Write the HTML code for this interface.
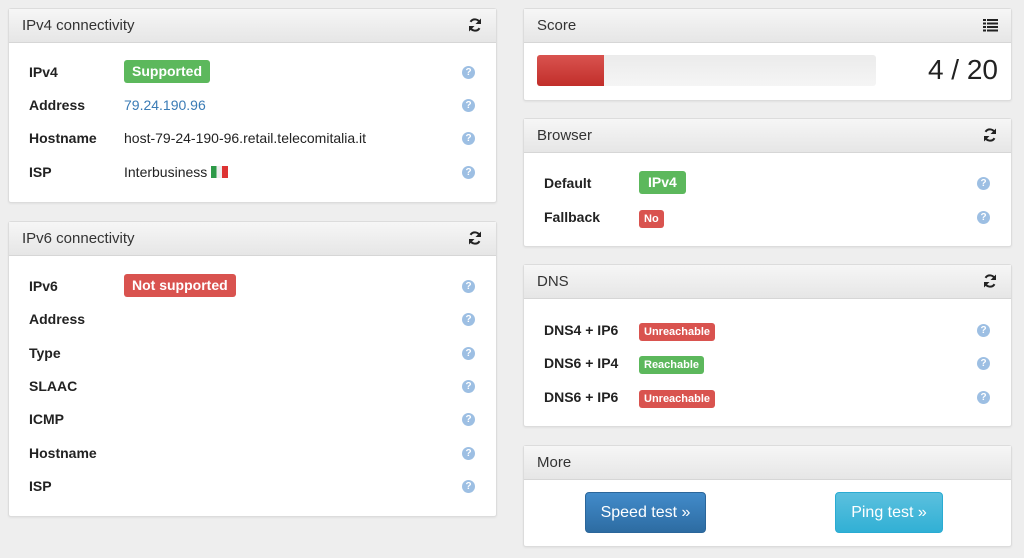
<!DOCTYPE html>
<html><head><meta charset="utf-8"><style>
*{box-sizing:border-box;margin:0;padding:0}
body{width:1024px;height:558px;background:#eeeeee;font-family:"Liberation Sans",sans-serif;color:#222;position:relative;overflow:hidden;font-size:14px}
.p{position:absolute;background:#fff;border:1px solid #dcdcdc;border-radius:3px;box-shadow:0 1px 2px rgba(0,0,0,.06)}
.h{height:34px;background:linear-gradient(#f6f6f6,#e6e6e6);border-bottom:1px solid #d6d6d6;padding:0 13px;line-height:34px;font-size:15px;color:#333;position:relative}
.h svg{position:absolute;right:13px;top:8px}
.r{position:absolute;left:0;right:0;height:22px;line-height:22px}
.l{position:absolute;font-weight:bold;font-size:14px}
.v{position:absolute;font-size:14px}
.q{position:absolute;width:13px;height:13px;border-radius:50%;background:#9dbfe3;top:5px;color:#fff;font-size:10px;font-weight:bold;line-height:13px;text-align:center}
.b{display:inline-block;color:#fff;font-weight:bold;border-radius:3px;padding:0 8px;line-height:23px;height:23px}
.g{background:#5cb85c}.d{background:#d9534f}
.s{font-size:11px;line-height:18px;height:18px;padding:0 5px;vertical-align:middle}
.btn{position:absolute;color:#fff;font-size:16px;text-align:center;border-radius:4px;line-height:40px;height:41px}
</style></head><body>
<svg width="0" height="0" style="position:absolute"><defs><symbol id="rf" viewBox="0 0 16 16"><path d="M13 6.5A5.2 5.2 0 0 0 3.5 4.8" fill="none" stroke="#222" stroke-width="2"/><path d="M14 1.5v5.5h-5.5z" fill="#222"/><path d="M3 9.5A5.2 5.2 0 0 0 12.5 11.2" fill="none" stroke="#222" stroke-width="2"/><path d="M2 14.5V9h5.5z" fill="#222"/></symbol></defs></svg>

<div class="p" style="left:8px;top:8px;width:489px;height:195px">
<div class="h">IPv4 connectivity<svg width="16" height="16"><use href="#rf"/></svg></div>
<div class="r" style="top:52px"><span class="l" style="left:20px">IPv4</span><span class="v" style="left:115px;top:-1px"><span class="b g">Supported</span></span><span class="q" style="left:453px">?</span></div>
<div class="r" style="top:85px"><span class="l" style="left:20px">Address</span><span class="v" style="left:115px;color:#3a7bb5">79.24.190.96</span><span class="q" style="left:453px">?</span></div>
<div class="r" style="top:118px"><span class="l" style="left:20px">Hostname</span><span class="v" style="left:115px">host-79-24-190-96.retail.telecomitalia.it</span><span class="q" style="left:453px">?</span></div>
<div class="r" style="top:152px"><span class="l" style="left:20px">ISP</span><span class="v" style="left:115px">Interbusiness <span style="display:inline-block;width:17px;height:12px;vertical-align:-1px;background:linear-gradient(90deg,#2e9a48 33%,#eee 33%,#eee 66%,#d33 66%)"></span></span><span class="q" style="left:453px">?</span></div>
</div>

<div class="p" style="left:8px;top:221px;width:489px;height:296px">
<div class="h">IPv6 connectivity<svg width="16" height="16"><use href="#rf"/></svg></div>
<div class="r" style="top:53px"><span class="l" style="left:20px">IPv6</span><span class="v" style="left:115px;top:-1px"><span class="b d">Not supported</span></span><span class="q" style="left:453px">?</span></div>
<div class="r" style="top:86px"><span class="l" style="left:20px">Address</span><span class="q" style="left:453px">?</span></div>
<div class="r" style="top:120px"><span class="l" style="left:20px">Type</span><span class="q" style="left:453px">?</span></div>
<div class="r" style="top:153px"><span class="l" style="left:20px">SLAAC</span><span class="q" style="left:453px">?</span></div>
<div class="r" style="top:186px"><span class="l" style="left:20px">ICMP</span><span class="q" style="left:453px">?</span></div>
<div class="r" style="top:220px"><span class="l" style="left:20px">Hostname</span><span class="q" style="left:453px">?</span></div>
<div class="r" style="top:253px"><span class="l" style="left:20px">ISP</span><span class="q" style="left:453px">?</span></div>
</div>

<div class="p" style="left:523px;top:8px;width:489px;height:93px">
<div class="h">Score<svg width="15" height="15" viewBox="0 0 15 15"><g fill="#222"><rect x="0" y="2" width="3" height="2"/><rect x="4" y="2" width="11" height="2"/><rect x="0" y="5.5" width="3" height="2"/><rect x="4" y="5.5" width="11" height="2"/><rect x="0" y="9" width="3" height="2"/><rect x="4" y="9" width="11" height="2"/><rect x="0" y="12.5" width="3" height="2"/><rect x="4" y="12.5" width="11" height="2"/></g></svg></div>
<div style="position:absolute;left:13px;top:46px;width:339px;height:31px;background:linear-gradient(#ebebeb,#f5f5f5);border-radius:3px;overflow:hidden"><div style="width:67px;height:100%;background:linear-gradient(#d9534f,#c12e2a)"></div></div>
<div style="position:absolute;right:13px;top:45px;font-size:28px;color:#222">4 / 20</div>
</div>

<div class="p" style="left:523px;top:118px;width:489px;height:129px">
<div class="h">Browser<svg width="16" height="16"><use href="#rf"/></svg></div>
<div class="r" style="top:53px"><span class="l" style="left:20px">Default</span><span class="v" style="left:115px;top:-1px"><span class="b g" style="padding:0 9px">IPv4</span></span><span class="q" style="left:453px">?</span></div>
<div class="r" style="top:87px"><span class="l" style="left:20px">Fallback</span><span class="v" style="left:115px;top:1px"><span class="b d s">No</span></span><span class="q" style="left:453px">?</span></div>
</div>

<div class="p" style="left:523px;top:264px;width:489px;height:163px">
<div class="h">DNS<svg width="16" height="16"><use href="#rf"/></svg></div>
<div class="r" style="top:54px"><span class="l" style="left:20px">DNS4 + IP6</span><span class="v" style="left:115px;top:1px"><span class="b d s">Unreachable</span></span><span class="q" style="left:453px">?</span></div>
<div class="r" style="top:87px"><span class="l" style="left:20px">DNS6 + IP4</span><span class="v" style="left:115px;top:1px"><span class="b g s">Reachable</span></span><span class="q" style="left:453px">?</span></div>
<div class="r" style="top:121px"><span class="l" style="left:20px">DNS6 + IP6</span><span class="v" style="left:115px;top:1px"><span class="b d s">Unreachable</span></span><span class="q" style="left:453px">?</span></div>
</div>

<div class="p" style="left:523px;top:445px;width:489px;height:102px">
<div class="h">More</div>
<div class="btn" style="left:61px;top:46px;width:121px;background:linear-gradient(#428bca,#2d6ca2);border:1px solid #2b669a">Speed test »</div>
<div class="btn" style="left:311px;top:46px;width:108px;background:linear-gradient(#5bc0de,#31b0d5);border:1px solid #2aabd2">Ping test »</div>
</div>
</body></html>
